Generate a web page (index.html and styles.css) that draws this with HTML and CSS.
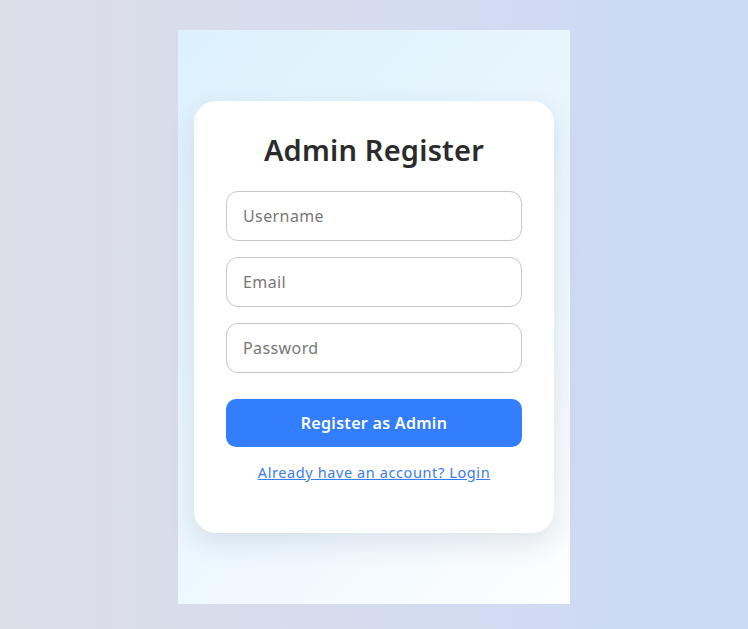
FILE: index.html
```html
<!DOCTYPE html>
<html lang="en">
<head>
<meta charset="utf-8">
<title>Admin Register</title>
<link rel="stylesheet" href="styles.css">
</head>
<body>
<div class="page">
  <div class="panel">
    <form class="card">
      <h2 class="title">Admin Register</h2>
      <input class="field" type="text" placeholder="Username">
      <input class="field" type="email" placeholder="Email">
      <input class="field" type="password" placeholder="Password">
      <button class="btn" type="button">Register as Admin</button>
      <a class="link" href="#">Already have an account? Login</a>
    </form>
  </div>
</div>
</body>
</html>
```

FILE: styles.css
```css
* { box-sizing: border-box; }
html, body { margin: 0; height: 100%; }
body {
  font-family: "Noto Sans", "DejaVu Sans", sans-serif;
  background: linear-gradient(90deg, #dcdee7 0%, #d5dcef 50%, #c9d9f6 100%);
}
.page {
  height: 629px;
  display: flex;
  justify-content: center;
  padding-top: 30px;
}
.panel {
  width: 392px;
  height: 574px;
  background: linear-gradient(135deg, #dcf1fc 0%, #eaf6fe 50%, #fdfeff 100%);
  display: flex;
  align-items: center;
  justify-content: center;
}
.card {
  width: 360px;
  height: 432px;
  background: #fff;
  border-radius: 22px;
  box-shadow: 0 10px 28px rgba(40, 60, 90, 0.12);
  padding: 28px 32px 0;
  display: flex;
  flex-direction: column;
  gap: 16px;
}
.title {
  margin: 0 0 4px;
  text-align: center;
  font-size: 29px;
  line-height: 42px;
  font-weight: 600;
  letter-spacing: 0.2px;
  color: #2b2b2b;
}
.field {
  height: 50px;
  border: 1px solid #c6c6c6;
  border-radius: 12px;
  padding: 0 16px;
  font-family: inherit;
  font-size: 16px;
  letter-spacing: 0.4px;
  color: #333;
  outline: none;
}
.field::placeholder { color: #777; }
.btn {
  margin-top: 10px;
  height: 48px;
  border: none;
  border-radius: 10px;
  background: #337dff;
  color: #fff;
  font-family: inherit;
  font-size: 16px;
  font-weight: 600;
  letter-spacing: 0.3px;
}
.link {
  margin-top: -1px;
  text-align: center;
  font-size: 14.5px;
  line-height: 21px;
  letter-spacing: 0.6px;
  color: #3a7bf0;
  text-decoration: underline;
}
```
